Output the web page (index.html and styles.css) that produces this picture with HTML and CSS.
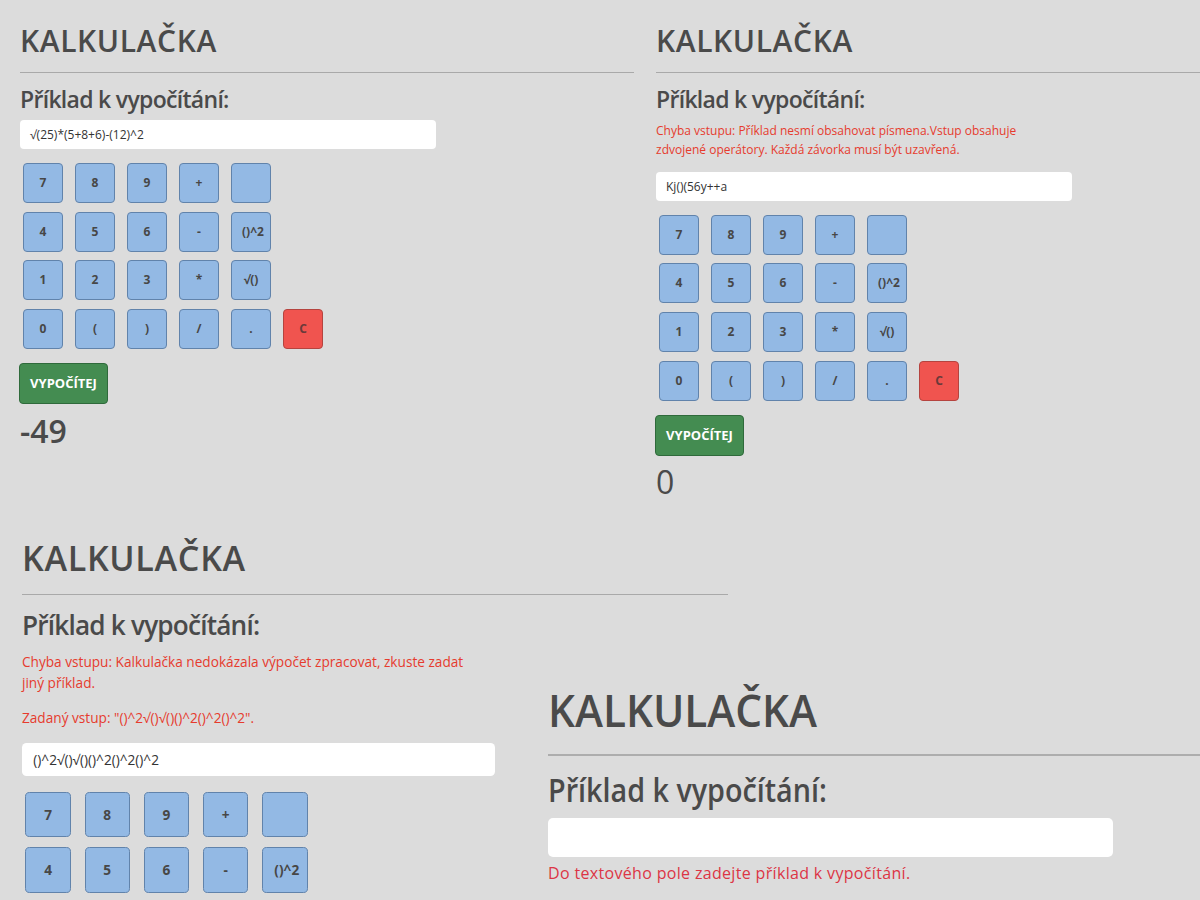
FILE: index.html
```html
<!DOCTYPE html>
<html lang="cs">
<head>
<meta charset="utf-8">
<title>Kalkulačka</title>
<link rel="stylesheet" href="styles.css">
</head>
<body>
<div class="collage">

  <section class="calc calc--a">
    <h1 class="calc-title">KALKULAČKA</h1>
    <hr class="calc-rule">
    <h2 class="calc-label">Příklad k vypočítání:</h2>
    <div class="calc-field">√(25)*(5+8+6)-(12)^2</div>
    <div class="calc-pad">
      <div class="calc-row"><span class="key">7</span><span class="key">8</span><span class="key">9</span><span class="key">+</span><span class="key"></span></div>
      <div class="calc-row"><span class="key">4</span><span class="key">5</span><span class="key">6</span><span class="key">-</span><span class="key">()^2</span></div>
      <div class="calc-row"><span class="key">1</span><span class="key">2</span><span class="key">3</span><span class="key">*</span><span class="key">√()</span></div>
      <div class="calc-row"><span class="key">0</span><span class="key">(</span><span class="key">)</span><span class="key">/</span><span class="key">.</span><span class="key key--clear">C</span></div>
    </div>
    <div class="calc-submit">VYPOČÍTEJ</div>
    <div class="calc-result">-49</div>
  </section>

  <section class="calc calc--b">
    <h1 class="calc-title">KALKULAČKA</h1>
    <hr class="calc-rule">
    <h2 class="calc-label">Příklad k vypočítání:</h2>
    <div class="calc-errors">
      <p class="calc-error">Chyba vstupu: Příklad nesmí obsahovat písmena.Vstup obsahuje<br>zdvojené operátory. Každá závorka musí být uzavřená.</p>
    </div>
    <div class="calc-field">Kj()(56y++a</div>
    <div class="calc-pad">
      <div class="calc-row"><span class="key">7</span><span class="key">8</span><span class="key">9</span><span class="key">+</span><span class="key"></span></div>
      <div class="calc-row"><span class="key">4</span><span class="key">5</span><span class="key">6</span><span class="key">-</span><span class="key">()^2</span></div>
      <div class="calc-row"><span class="key">1</span><span class="key">2</span><span class="key">3</span><span class="key">*</span><span class="key">√()</span></div>
      <div class="calc-row"><span class="key">0</span><span class="key">(</span><span class="key">)</span><span class="key">/</span><span class="key">.</span><span class="key key--clear">C</span></div>
    </div>
    <div class="calc-submit">VYPOČÍTEJ</div>
    <div class="calc-result calc-result--light">0</div>
  </section>

  <section class="calc calc--c">
    <h1 class="calc-title">KALKULAČKA</h1>
    <hr class="calc-rule">
    <h2 class="calc-label">Příklad k vypočítání:</h2>
    <div class="calc-errors">
      <p class="calc-error">Chyba vstupu: Kalkulačka nedokázala výpočet zpracovat, zkuste zadat<br>jiný příklad.</p>
      <p class="calc-error">Zadaný vstup: "()^2√()√()()^2()^2()^2".</p>
    </div>
    <div class="calc-field">()^2√()√()()^2()^2()^2</div>
    <div class="calc-pad">
      <div class="calc-row"><span class="key">7</span><span class="key">8</span><span class="key">9</span><span class="key">+</span><span class="key"></span></div>
      <div class="calc-row"><span class="key">4</span><span class="key">5</span><span class="key">6</span><span class="key">-</span><span class="key">()^2</span></div>
    </div>
  </section>

  <section class="calc calc--d">
    <h1 class="calc-title">KALKULAČKA</h1>
    <hr class="calc-rule">
    <h2 class="calc-label">Příklad k vypočítání:</h2>
    <div class="calc-field"></div>
    <p class="calc-feedback">Do textového pole zadejte příklad k vypočítání.</p>
  </section>

</div>
</body>
</html>
```

FILE: styles.css
```css
html, body {
  margin: 0;
  padding: 0;
}

body {
  background: #dcdcdc;
  font-family: "Open Sans", "DejaVu Sans", sans-serif;
  color: #4a4a4a;
}

.collage {
  display: grid;
  grid-template-columns: 636px 564px;
  grid-template-rows: 512px 388px;
  width: 1200px;
  height: 900px;
  overflow: hidden;
}

.calc {
  min-width: 0;
  padding: 23px 0 0 20px;
  box-sizing: border-box;
}

.calc--a {
  grid-area: 1 / 1;
  padding-right: 2px;
}

.calc--b {
  grid-area: 1 / 2;
}

.calc--c {
  grid-area: 2 / 1 / 3 / 3;
  zoom: 1.138;
  width: 640px;
  padding-left: 19.3px;
  padding-top: 23px;
  justify-self: start;
  align-self: start;
}

.calc--d {
  grid-area: 2 / 1 / 3 / 3;
  margin: 171px 0 0 548px;
  padding: 0;
  align-self: start;
}

.calc-title {
  margin: 0;
  font-size: 30px;
  line-height: 36px;
  font-weight: 600;
  letter-spacing: 0.6px;
  color: #4a4a4a;
}

.calc-rule {
  margin: 13px 0 0;
  border: 0;
  border-top: 1px solid #a9a9a9;
  height: 0;
}

.calc-label {
  margin: 12px 0 6px;
  font-size: 23px;
  line-height: 29px;
  font-weight: 600;
  letter-spacing: -0.7px;
  color: #4a4a4a;
}

.calc-errors {
  padding-top: 2px;
}

.calc-error {
  margin: 0 0 12.8px;
  font-size: 12px;
  line-height: 18.5px;
  color: #e63b2e;
  white-space: nowrap;
}

.calc-field {
  width: 416px;
  height: 29px;
  box-sizing: border-box;
  padding: 0 10px;
  background: #fff;
  border-radius: 4px;
  font-size: 12px;
  line-height: 29px;
  color: #333;
  white-space: nowrap;
}

.calc-pad {
  margin: 14px 0 0 3px;
  display: flex;
  flex-direction: column;
  gap: 8.67px;
}

.calc-row {
  display: flex;
  gap: 12px;
}

.key {
  display: block;
  width: 40px;
  height: 40px;
  box-sizing: border-box;
  padding: 0 10px;
  border: 1px solid #6183ab;
  border-radius: 4px;
  background: #93b9e4;
  color: #474747;
  font-size: 12px;
  font-weight: 700;
  line-height: 38px;
  text-align: center;
  white-space: nowrap;
}

.key--clear {
  background: #f0544f;
  border-color: #b5443f;
  color: #6a3a3a;
}

.calc-submit {
  margin: 14px 0 0 -1px;
  width: 89px;
  height: 41px;
  box-sizing: border-box;
  background: #448c51;
  border: 1px solid #2f6a3b;
  border-radius: 4px;
  color: #fff;
  font-size: 13px;
  font-weight: 700;
  line-height: 39px;
  text-align: center;
}

.calc-result {
  margin-top: 7.6px;
  font-size: 32px;
  line-height: 38px;
  font-weight: 600;
  color: #4a4a4a;
}

.calc-result--light {
  font-weight: 500;
}

/* fourth, larger screenshot */
.calc--d .calc-title {
  font-size: 45px;
  line-height: 54px;
  letter-spacing: 0;
  transform: scaleX(0.94);
  transform-origin: left center;
}

.calc--d .calc-rule {
  margin-top: 16.6px;
  border-top: 2px solid #adadad;
}

.calc--d .calc-label {
  margin: 14.7px 0 7.8px;
  font-size: 33px;
  line-height: 40px;
  letter-spacing: 0;
  transform: scaleX(0.87);
  transform-origin: left center;
}

.calc--d .calc-field {
  width: 565px;
  height: 39px;
  border-radius: 5px;
}

.calc-feedback {
  margin: 3.8px 0 0;
  font-size: 16px;
  line-height: 24px;
  letter-spacing: 0.33px;
  color: #dc3545;
}
```
